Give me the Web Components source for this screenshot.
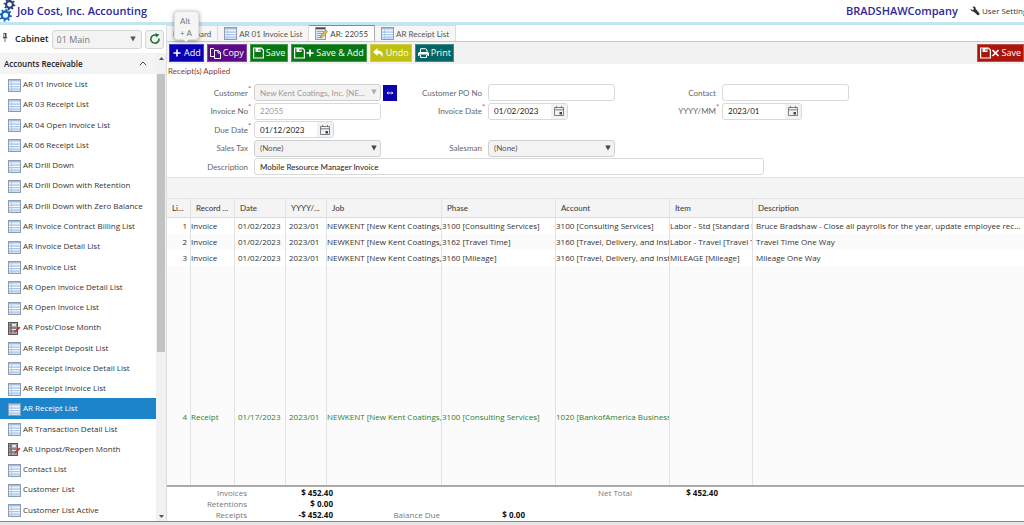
<!DOCTYPE html>
<html lang="en">
<head>
<meta charset="utf-8">
<title>Job Cost, Inc. Accounting</title>
<style>
  html, body { margin: 0; height: 100%; }
  body { font: 8px/12px "Open Sans", "Noto Sans", sans-serif; color: #333; background: #fff; overflow: hidden; }
</style>
</head>
<body>
<job-app></job-app>
<script>
const define = (name, html, setup) => {
  const template = document.createElement('template');
  template.innerHTML = html;
  customElements.define(name, class extends HTMLElement {
    constructor() {
      super();
      this.attachShadow({ mode: 'open' }).append(template.content.cloneNode(true));
    }
    connectedCallback() { if (setup && !this.ready) { this.ready = true; setup(this, this.shadowRoot); } }
  });
};

const sheetLines = '<rect x=".5" y=".5" width="12" height="12" fill="#cfe0f5" stroke="#8b9db5"/><path d="M1 1.5h11" stroke="#a9bcd6"/><path d="M1 4h11M1 6.5h11M1 9h11" stroke="#fff"/><path d="M1 5h11M1 7.5h11M1 10h11" stroke="#9dbbe3" stroke-width=".8"/><path d="M3.5 1v11" stroke="#a8c2e6" stroke-width=".7"/>';
const floppy = '<path d="M.6 1h7.800l2 2v8H.6z" fill="none" stroke="#fff" stroke-width="1.2"/><path d="M2.500 1h5v4h-5z" fill="#fff"/><path d="M5.500 2h1v2h-1z" fill="#444"/>';
const gear = (cx, cy, r, color) => {
  let teeth = '';
  for (let i = 0; i < 8; i++) teeth += `<rect x="${cx - r * .2}" y="${cy - r * 1.4}" width="${r * .4}" height="${r * .6}" fill="${color}" transform="rotate(${i * 45 + 10} ${cx} ${cy})"/>`;
  return teeth + `<circle cx="${cx}" cy="${cy}" r="${r * .8}" fill="none" stroke="${color}" stroke-width="${r * .5}"/>`;
};
const icons = {
  gears: [17, 22, gear(9.5, 4.5, 4.2, '#2b3f73') + gear(5.5, 15.2, 4.6, '#1668c4')],
  list: [13, 13, sheetLines],
  edit: [13, 13, '<rect x=".5" y=".5" width="10" height="12" fill="#dbe7f6" stroke="#8b9db5"/><path d="M1 1.5h9" stroke="#444" stroke-width="1.5"/><path d="M2 4.5h7M2 6.5h6M2 8.5h4M2 10.5h5" stroke="#7f97bb" stroke-width=".8"/><path d="M5 11l1-3 5-5 1.700 1.700-5 5z" fill="#e8b93c" stroke="#8a6f34" stroke-width=".5"/>'],
  month: [13, 13, '<rect x=".5" y=".5" width="9" height="12" fill="#a9a9ad" stroke="#5d5658"/><path d="M3 1v11M.5 3h9M.5 6h9M.5 9h9" stroke="#5d5658" stroke-width=".8"/><path d="M4 2h4v2H4zM4 7h4v1H4z" fill="#e6e6ea"/><path d="M6 11l1-2.500 4-4 1.500 1.300-4 4z" fill="#c8392b"/>'],
  pin: [6, 9, '<path d="M1.500 0h3v4l1.200 1.200H.3L1.500 4zM2.600 5h.8v4h-.8z" fill="#444"/><path d="M2.300 1h.8v3h-.8z" fill="#fff"/>'],
  refresh: [12, 12, '<path d="M8 2.500A4.100 4.100 0 1 0 10 5.500" fill="none" stroke="#15702a" stroke-width="1.500"/><path d="M6.300.3l4 1.200-2.800 3z" fill="#15702a"/>'],
  up: [8, 5, '<path d="M.8 4.200L4 1l3.200 3.200" fill="none" stroke="#444"/>'],
  triup: [5, 3, '<path d="M0 3h5L2.500 0z" fill="#555"/>'],
  tridown: [5, 3, '<path d="M0 0h5L2.500 3z" fill="#555"/>'],
  caret: [6, 6, '<path d="M.3 .5h5.400L3 5.500z" fill="currentColor"/>'],
  calendar: [10, 10, '<path d="M.5 1.500h9v8h-9zM.5 3.800h9M2.500 0v2M7.500 0v2" fill="none" stroke="#6a737c" stroke-width=".9"/><path d="M5.500 6H8v2.500H5.500z" fill="#444"/>'],
  lookup: [8, 6, '<path d="M1 3h6M2.500 1.900L1.200 3l1.300 1.100M5.500 1.900L6.800 3 5.500 4.100" fill="none" stroke="#fff" stroke-width=".9"/>'],
  wrench: [10, 10, '<path d="M.6 2.800L2.500 4.300 4 2.900 2.600.8C4 .2 5.800.900 5.800 3l3.600 4.200c.6 1.200-.7 2.600-2 1.800L3.600 5.500C1.800 5.800.4 4.500.6 2.800z" fill="#333"/>'],
  plus: [10, 8, '<path d="M5 .5v7M1.500 4h7" stroke="#fff" stroke-width="1.600"/>'],
  copy: [11, 11, '<path d="M4.500 8.500h-4v-8h3l1 1M4.500 2.500h4l2 2v6h-6zM8 2.500v2.500h2.500" fill="none" stroke="#fff"/>'],
  save: [11, 12, floppy],
  saveadd: [20, 12, floppy + '<path d="M16 2.500v7M12.500 6h7" stroke="#fff" stroke-width="1.700"/>'],
  saveclose: [20, 12, floppy + '<path d="M12.500 3l6 6M18.500 3l-6 6" stroke="#fff" stroke-width="1.700"/>'],
  undo: [11, 10, '<path d="M0 4L4.500 0v2.400C8.500 2.600 11 4.500 9.300 9.500 8.800 6.500 7.200 5.800 4.500 5.700V8z" fill="#fff"/>'],
  print: [11, 10, '<path d="M2.500 4V.7h5.300L9 2v2" fill="none" stroke="#fff"/><path d="M1.500 4h8q1.500 0 1.500 1.500V8H9.500V6.500h-8V8H0V5.500Q0 4 1.500 4z" fill="#fff"/><path d="M2.500 7v2.500h6V7" fill="none" stroke="#fff"/>'],
};

define('ui-icon', '<style>:host{display:inline-flex;flex:none}svg{display:block}</style>', (el, root) => {
  const [w, h, art] = icons[el.getAttribute('name')];
  const box = document.createElement('span');
  box.innerHTML = `<svg width="${w}" height="${h}" viewBox="0 0 ${w} ${h}" aria-hidden="true">${art}</svg>`;
  root.append(box.firstChild);
});

define('app-header', `
<style>
  :host { display: flex; align-items: center; height: 22px; flex: none; border-bottom: 3px solid #c2e5f0; overflow: hidden; white-space: nowrap; }
  h1, strong { margin: 0; font-size: 11px; line-height: 16px; font-weight: 600; color: #2d2799; }
  .account { display: flex; align-items: center; width: 178px; margin-left: auto; }
  strong { flex: 1 0 124px; }
  a { display: flex; gap: 2px; align-items: center; flex: none; width: 54px; color: #333; text-decoration: none; }
</style>
<ui-icon name="gears"></ui-icon><h1>Job Cost, Inc. Accounting</h1>
<div class="account"><strong>BRADSHAWCompany</strong><a href="#settings"><ui-icon name="wrench"></ui-icon>User Settings</a></div>`);

define('nav-item', `
<style>
  :host { display: flex; flex: 1 1 0; min-height: 0; }
  a { flex: 1; display: flex; align-items: center; gap: 2px; padding-left: 8px; color: #333; text-decoration: none; white-space: nowrap; }
  ::slotted(ui-icon) { padding-top: 2px; }
  :host([selected]) a { background: #1b84ca; color: #fff; }
</style>
<a href="#"><slot name="icon"></slot><span><slot></slot></span></a>`);

const lists = ['AR 01 Invoice List', 'AR 03 Receipt List', 'AR 04 Open Invoice List', 'AR 06 Receipt List', 'AR Drill Down', 'AR Drill Down with Retention', 'AR Drill Down with Zero Balance', 'AR Invoice Contract Billing List', 'AR Invoice Detail List', 'AR Invoice List', 'AR Open Invoice Detail List', 'AR Open Invoice List', 'AR Post/Close Month', 'AR Receipt Deposit List', 'AR Receipt Invoice Detail List', 'AR Receipt Invoice List', 'AR Receipt List', 'AR Transaction Detail List', 'AR Unpost/Reopen Month', 'Contact List', 'Customer List', 'Customer List Active'];

define('side-nav', `
<style>
  :host { display: flex; flex-direction: column; width: 166px; flex: none; }
  .cabinet { display: flex; align-items: center; height: 28px; box-sizing: border-box; padding: 0 2px 0 2px; flex: none; }
  label { font-weight: 600; font-size: 9px; margin: 0 3px 0 7px; color: #222; }
  ui-icon[name=pin] { padding-bottom: 3px; }
  .pick { position: relative; flex: 1; color: #555; }
  .pick ui-icon { position: absolute; right: 6px; top: 6px; pointer-events: none; }
  select, button { box-sizing: border-box; height: 19px; border: 1px solid #d5d5d5; border-radius: 3px; background: #f3f3f3; }
  select { display: block; width: 100%; appearance: none; padding: 0 4px; font: 9px "Open Sans", sans-serif; color: #777; }
  button { display: flex; align-items: center; justify-content: center; width: 19px; padding: 0; margin-left: 3px; }
  .scroller { flex: 1; min-height: 0; display: flex; }
  .panel { flex: 1; display: flex; flex-direction: column; min-width: 0; }
  h2 { display: flex; flex: none; align-items: center; justify-content: space-between; margin: 0; height: 21px; padding: 0 9px 0 4px; background: #f4f4f4; font-size: 8px; font-weight: 600; color: #222; }
  nav { flex: 1; display: flex; flex-direction: column; min-height: 0; padding-bottom: 1px; }
  .bar { width: 10px; background: #f1f1f1; display: flex; flex-direction: column; align-items: center; padding: 4px 0 3px; box-sizing: border-box; }
  .thumb { width: 8px; flex: 277; background: #c2c2c2; margin-top: 14px; }
  .rest { flex: 162; }
</style>
<div class="cabinet"><ui-icon name="pin"></ui-icon><label for="cab">Cabinet</label>
  <span class="pick"><select id="cab"><option>01 Main</option></select><ui-icon name="caret"></ui-icon></span>
  <button aria-label="Refresh"><ui-icon name="refresh"></ui-icon></button></div>
<div class="scroller"><div class="panel"><h2>Accounts Receivable<ui-icon name="up"></ui-icon></h2><nav></nav></div>
<div class="bar"><ui-icon name="triup"></ui-icon><div class="thumb"></div><div class="rest"></div><ui-icon name="tridown"></ui-icon></div></div>`, (el, root) => {
  root.querySelector('nav').innerHTML = lists.map(t =>
    `<nav-item${t === 'AR Receipt List' ? ' selected' : ''}><ui-icon slot="icon" name="${/Month/.test(t) ? 'month' : 'list'}"></ui-icon>${t}</nav-item>`).join('');
});

define('tab-item', `
<style>
  :host { display: flex; }
  a { display: flex; align-items: center; gap: 2px; padding: 0 6px; box-sizing: border-box; height: 16px; border: 1px solid #dcdcdc; border-width: 1px 1px 0 0; background: #f6f6f6; color: #555; text-decoration: none; white-space: nowrap; font-family: Lato, "Open Sans", sans-serif; }
  :host([active]) a { background: #fff; border-color: #888 #aaa; color: #444; }
</style>
<a href="#"><slot name="icon"></slot><slot></slot></a>`);

define('tool-button', `
<style>
  :host { display: flex; }
  button { display: flex; align-items: center; gap: 2px; height: 18px; box-sizing: border-box; padding: 0 2px; border: 1px solid rgba(255,255,255,.25); background: var(--tone); color: #fff; font: 9px/14px "Open Sans", sans-serif; white-space: nowrap; }
</style>
<button><slot></slot></button>`);

define('form-field', `
<style>
  :host { display: grid; grid-template-columns: 81px 127px auto; column-gap: 6px; align-items: center; font-family: Lato, "Open Sans", sans-serif; }
  :host([wide]) { grid-column: 1 / -1; grid-template-columns: 81px 510px; }
  :host([kind=date]) { grid-template-columns: 81px 80px; }
  label { position: relative; text-align: right; color: #666; }
  :host([required]) label::after { content: "*"; position: absolute; left: 100%; top: -4px; color: #c9622a; }
  .box { position: relative; display: flex; height: 17px; box-sizing: border-box; border: 1px solid #d9d9d9; border-radius: 3px; background: #fff; overflow: hidden; }
  input, select { flex: 1; width: 100%; min-width: 0; border: 0; padding: 0 5px; margin: 0; background: none; appearance: none; color: #222; opacity: 1; font: 8px Lato, "Open Sans", sans-serif; }
  :host([kind=select]) .box { background: #f3f3f3; border-color: #d0d0d0; }
  select { color: #555; padding-right: 14px; }
  .box > ui-icon { position: absolute; right: 3px; top: 4px; color: #444; pointer-events: none; }
  .box > button { display: flex; align-items: center; justify-content: center; width: 16px; padding: 0; border: 0; background: #f2f2f2; }
  :host([disabled]) input, :host([disabled]) select { color: #999; }
  :host([disabled]) .box > ui-icon { color: #aaa; }
  ::slotted(button) { margin-left: -4px; }
</style>
<label for="c"></label><span class="box"></span><slot></slot>`, (el, root) => {
  const kind = el.getAttribute('kind'), value = el.getAttribute('value') || '', off = el.hasAttribute('disabled') ? ' disabled' : '';
  root.querySelector('label').textContent = el.getAttribute('label');
  root.querySelector('.box').innerHTML = kind === 'select'
    ? `<select id="c"${off}><option>${value}</option></select><ui-icon name="caret"></ui-icon>`
    : `<input id="c" value="${value}"${off}>` + (kind === 'date' ? '<button aria-label="Open calendar"><ui-icon name="calendar"></ui-icon></button>' : '');
});

define('invoice-form', `
<style>
  :host { display: grid; grid-template-columns: 234px 234px 234px; grid-template-rows: repeat(5, 17px); align-content: space-between; height: 91px; flex: none; }
  .go { display: flex; align-items: center; justify-content: center; width: 14px; height: 16px; padding: 0; border: 0; background: #0a00b0; }
  .first { grid-column: 1; }
</style>
<form-field kind="select" label="Customer" value="New Kent Coatings, Inc. [NE..." required disabled><button class="go" aria-label="Look up customer"><ui-icon name="lookup"></ui-icon></button></form-field>
<form-field label="Customer PO No"></form-field>
<form-field label="Contact"></form-field>
<form-field label="Invoice No" value="22055" required disabled></form-field>
<form-field kind="date" label="Invoice Date" value="01/02/2023" required></form-field>
<form-field kind="date" label="YYYY/MM" value="2023/01" required></form-field>
<form-field kind="date" label="Due Date" value="01/12/2023" required></form-field>
<form-field class="first" kind="select" label="Sales Tax" value="(None)"></form-field>
<form-field kind="select" label="Salesman" value="(None)"></form-field>
<form-field wide label="Description" value="Mobile Resource Manager Invoice"></form-field>`);

const rows = [
  ['1', 'Invoice', '01/02/2023', '2023/01', 'NEWKENT [New Kent Coatings,', '3100 [Consulting Services]', '3100 [Consulting Services]', 'Labor - Std [Standard l', 'Bruce Bradshaw - Close all payrolls for the year, update employee records'],
  ['2', 'Invoice', '01/02/2023', '2023/01', 'NEWKENT [New Kent Coatings,', '3162 [Travel Time]', '3160 [Travel, Delivery, and Insta', 'Labor - Travel [Travel T', 'Travel Time One Way'],
  ['3', 'Invoice', '01/02/2023', '2023/01', 'NEWKENT [New Kent Coatings,', '3160 [Mileage]', '3160 [Travel, Delivery, and Insta', 'MILEAGE [Mileage]', 'Mileage One Way'],
  null,
  ['4', 'Receipt', '01/17/2023', '2023/01', 'NEWKENT [New Kent Coatings,', '3100 [Consulting Services]', '1020 [BankofAmerica Business', '', ''],
  null,
];

define('invoice-grid', `
<style>
  :host { display: grid; flex: 1; min-height: 0; border-bottom: 2px solid #aaa; }
  table { width: 100%; height: 100%; table-layout: fixed; border-collapse: separate; border-spacing: 0; }
  th, td { padding: 0; border-right: 1px solid #e2e2e2; white-space: nowrap; overflow: hidden; }
  th:last-child, td:last-child { border-right: 0; }
  th { height: 18px; padding: 0 4px 0 5px; text-align: left; font-weight: 400; font-family: Lato, "Open Sans", sans-serif; background: #f4f4f4; border-top: 1px solid #e4e4e4; border-bottom: 1px solid #dcdcdc; }
  td { height: 16px; background: #fbfbfb; }
  tr.plain td { background: #fff; }
  td:first-child { text-align: right; padding-right: 3px; }
  td:nth-child(3), td:nth-child(4) { padding-left: 3px; }
  td:last-child { padding-left: 3px; text-overflow: ellipsis; }
  tr.receipt td { color: #2e7d2e; }
  tr.tail td { height: 60px; }
  tr.space td { height: auto; }
</style>
<table><colgroup><col style="width:24px"><col style="width:44px"><col style="width:51px"><col style="width:41px"><col style="width:115px"><col style="width:114px"><col style="width:114px"><col style="width:83px"><col></colgroup>
<thead><tr><th>Li...</th><th>Record ...</th><th>Date</th><th>YYYY/...</th><th>Job</th><th>Phase</th><th>Account</th><th>Item</th><th>Description</th></tr></thead><tbody></tbody></table>`, (el, root) => {
  const kinds = ['plain', '', 'plain', 'space', 'receipt', 'tail'];
  root.querySelector('tbody').innerHTML = rows.map((r, i) =>
    `<tr class="${kinds[i]}">${(r || Array(9).fill('')).map(t => `<td>${t}</td>`).join('')}</tr>`).join('');
});

define('invoice-totals', `
<style>
  :host { display: block; flex: none; }
  dl { display: grid; grid-template-columns: 80px 86px 107px 85px 107px 86px; grid-template-rows: repeat(3, 11px); padding-bottom: 1px; margin: 0; align-items: center; text-align: right; white-space: nowrap; line-height: 11px; }
  dt { color: #777; } dd { margin: 0; font-weight: 700; color: #111; }
  .left { grid-column: 1; } .mid { grid-column: 3; } .far { grid-column: 5; }
</style>
<dl><dt class="left">Invoices</dt><dd>$ 452.40</dd><dt class="far">Net Total</dt><dd>$ 452.40</dd>
<dt class="left">Retentions</dt><dd>$ 0.00</dd>
<dt class="left">Receipts</dt><dd>-$ 452.40</dd><dt class="mid">Balance Due</dt><dd>$ 0.00</dd></dl>`);

define('key-hint', `
<style>
  :host { display: block; position: absolute; left: 174px; top: 11px; width: 25px; height: 29px; box-sizing: border-box; padding-top: 3px; background: #f5f5f5; border: 1px solid #ddd; border-radius: 3px; box-shadow: 0 1px 4px rgba(0,0,0,.4); color: #777; font-family: Lato, "Open Sans", sans-serif; z-index: 2; }
  :host::after { content: ""; position: absolute; left: 8px; top: 100%; border: 3px solid transparent; border-top-color: #f5f5f5; }
  span { display: block; padding-left: 5px; }
</style><span>Alt</span><span>+ A</span>`);

define('job-app', `
<style>
  :host { display: flex; flex-direction: column; height: 100vh; position: relative; }
  .body { flex: 1; min-height: 0; display: flex; }
  main { flex: 1; min-width: 0; display: flex; flex-direction: column; border-left: 1px solid #ddd; }
  .tabs { display: flex; height: 16px; flex: none; align-items: flex-end; border-bottom: 1px solid #c8c8c8; }
  .tools { display: flex; flex: none; gap: 3px; height: 22px; align-items: center; padding-left: 2px; background: #f2f2f2; }
  .tools .end { margin-left: auto; }
  p { margin: 0; height: 20px; line-height: 14px; padding-left: 1px; flex: none; color: #8c3a2a; font-family: Lato, "Open Sans", sans-serif; }
  .band { height: 20px; flex: none; background: #f4f4f4; border-top: 1px solid #e2e2e2; margin-top: 2px; }
  footer { height: 3px; flex: none; background: #e6e6e6; border-top: 1px solid #888; }
</style>
<app-header></app-header>
<div class="body"><side-nav></side-nav>
<main>
  <div class="tabs">
    <tab-item>Dashboard</tab-item>
    <tab-item><ui-icon slot="icon" name="list"></ui-icon>AR 01 Invoice List</tab-item>
    <tab-item active><ui-icon slot="icon" name="edit"></ui-icon>AR: 22055</tab-item>
    <tab-item><ui-icon slot="icon" name="list"></ui-icon>AR Receipt List</tab-item>
  </div>
  <div class="tools">
    <tool-button style="--tone:#0a00b4"><ui-icon name="plus"></ui-icon>Add</tool-button>
    <tool-button style="--tone:#5a0c86"><ui-icon name="copy"></ui-icon>Copy</tool-button>
    <tool-button style="--tone:#087612"><ui-icon name="save"></ui-icon>Save</tool-button>
    <tool-button style="--tone:#087612"><ui-icon name="saveadd"></ui-icon>Save &amp; Add</tool-button>
    <tool-button style="--tone:#c0c010"><ui-icon name="undo"></ui-icon>Undo</tool-button>
    <tool-button style="--tone:#056464"><ui-icon name="print"></ui-icon>Print</tool-button>
    <tool-button class="end" style="--tone:#aa160c"><ui-icon name="saveclose"></ui-icon>Save</tool-button>
  </div>
  <p>Receipt(s) Applied</p>
  <invoice-form></invoice-form>
  <div class="band"></div>
  <invoice-grid></invoice-grid>
  <invoice-totals></invoice-totals>
</main></div>
<footer></footer>
<key-hint></key-hint>`);
</script>
</body>
</html>
